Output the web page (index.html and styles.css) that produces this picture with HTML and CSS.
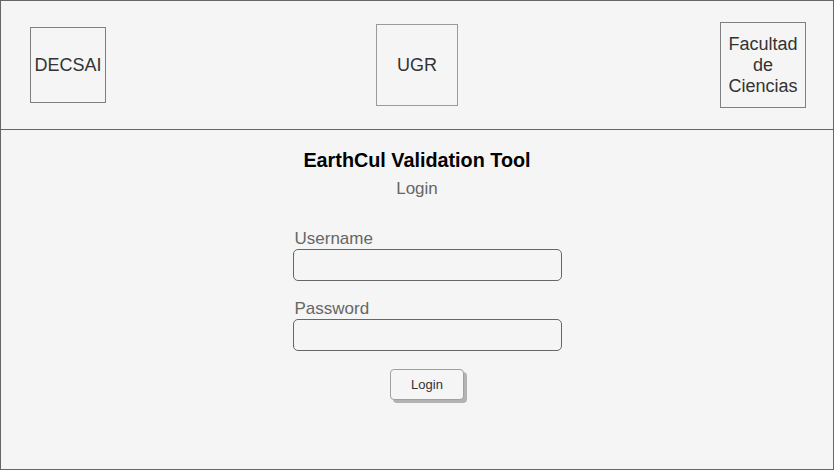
FILE: index.html
```
<!DOCTYPE html>
<html>
<head>
<meta charset="utf-8">
<link rel="stylesheet" href="styles.css">
</head>
<body>
<div class="frame">
  <header class="header">
    <div class="logo logo-left">DECSAI</div>
    <div class="logo logo-mid">UGR</div>
    <div class="logo logo-right">Facultad<br>de<br>Ciencias</div>
  </header>
  <main class="content">
    <h1 class="title">EarthCul Validation Tool</h1>
    <div class="subtitle">Login</div>
    <form class="form">
      <label class="label">Username</label>
      <div class="input"></div>
      <label class="label label-pass">Password</label>
      <div class="input"></div>
      <div class="btn-row"><button type="button" class="btn">Login</button></div>
    </form>
  </main>
</div>
</body>
</html>
```
FILE: styles.css
```
html, body {
  margin: 0;
  padding: 0;
  background: #ffffff;
}
body {
  font-family: "Liberation Sans", Arial, Helvetica, sans-serif;
}
.frame {
  width: 834px;
  height: 470px;
  box-sizing: border-box;
  border: 1px solid #666666;
  background: #f5f5f5;
}
.header {
  height: 128px;
  border-bottom: 1px solid #666666;
  display: grid;
  grid-template-columns: 1fr auto 1fr;
  align-items: center;
  padding: 0 27px;
}
.logo {
  box-sizing: border-box;
  display: flex;
  align-items: center;
  justify-content: center;
  text-align: center;
  font-size: 18px;
  color: #333333;
  line-height: 21px;
}
.logo-left {
  width: 76px;
  height: 76px;
  border: 1px solid #808080;
  justify-self: start;
  margin-left: 2px;
}
.logo-mid {
  width: 82px;
  height: 82px;
  border: 1px solid #9a9a9a;
}
.logo-right {
  width: 86px;
  height: 86px;
  border: 1px solid #808080;
  justify-self: end;
}
.content {
  display: flex;
  flex-direction: column;
  align-items: center;
}
.title {
  margin: 19px 0 0 0;
  font-size: 19.8px;
  font-weight: bold;
  color: #000000;
  line-height: 22px;
}
.subtitle {
  margin-top: 8px;
  font-size: 17px;
  color: #666666;
  line-height: 20px;
}
.form {
  margin: 28px 0 0 20px;
  width: 269px;
  display: flex;
  flex-direction: column;
}
.label {
  font-size: 17px;
  color: #666666;
  line-height: 20px;
  padding: 2px 0 0 2px;
}
.label-pass {
  margin-top: 16px;
}
.input {
  height: 32px;
  box-sizing: border-box;
  border: 1px solid #666666;
  border-radius: 5px;
  background: #f5f5f5;
}
.btn-row {
  display: flex;
  justify-content: center;
  margin-top: 18px;
}
.btn {
  width: 74px;
  height: 31px;
  box-sizing: border-box;
  border: 1px solid #a0a0a0;
  border-radius: 4px;
  background: #f5f5f5;
  box-shadow: 3px 3px 0 #b3b3b3;
  font-family: "Liberation Sans", Arial, Helvetica, sans-serif;
  font-size: 13px;
  color: #333333;
  padding: 0;
}
```
